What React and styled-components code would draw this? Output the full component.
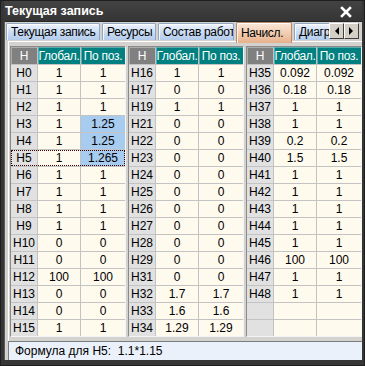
import React from 'react'
import styled, { createGlobalStyle } from 'styled-components'

const GlobalStyle = createGlobalStyle`
  html, body {
    margin: 0;
    padding: 0;
    background: #2f2f2f;
  }
  body {
    font-family: "Liberation Sans", Arial, sans-serif;
    font-size: 12px;
  }
`

const Window = styled.div`
  width: 365px;
  height: 366px;
  box-sizing: border-box;
  display: flex;
  flex-direction: column;
  background: #363636;
  border: 1px solid #1e1e1e;
  padding: 0 2px 5px 3px;
`

const TitleBar = styled.div`
  height: 20px;
  display: flex;
  align-items: center;
  justify-content: space-between;
  padding: 0 10px 0 1px;
  color: #fff;
  font-weight: bold;
  font-size: 12.5px;
  background: linear-gradient(#434343, #353535);
`

const CloseBtn = styled.div`
  width: 12px;
  height: 12px;
  display: flex;
  margin-top: 2px;
`

const Body = styled.div`
  flex: 1;
  display: flex;
  flex-direction: column;
  background: #d4d2ce;
  border-top: 1px solid #262626;
  border-left: 1px solid #5a5a5a;
`

const TabStrip = styled.div`
  height: 19px;
  display: flex;
  align-items: flex-end;
  padding-left: 1px;
`

const TabViewport = styled.div`
  width: 323px;
  display: flex;
  align-items: flex-end;
  gap: 2px;
  overflow-x: clip;
  overflow-y: visible;
`

const Tab = styled.div`
  flex: 0 0 ${p => p.$w}px;
  min-width: 0;
  box-sizing: border-box;
  height: ${p => (p.$active ? 21 : 17)}px;
  margin-bottom: ${p => (p.$active ? -2 : 1)}px;
  position: relative;
  z-index: ${p => (p.$active ? 2 : 0)};
  display: flex;
  align-items: center;
  padding-left: 4px;
  overflow: hidden;
  white-space: nowrap;
  font-size: 12px;
  letter-spacing: -0.3px;
  color: #000;
  border: 1px solid ${p => (p.$active ? '#b98a6c' : '#8fa6c4')};
  border-bottom: none;
  border-radius: 2px 2px 0 0;
  background: ${p => (p.$active
    ? 'linear-gradient(#fbe8da, #f0c8aa 60%, #e6b08c)'
    : 'linear-gradient(#eef3fb, #c9dbf3 55%, #b3cbeb)')};
  box-shadow: inset 1px 1px 0 rgba(255, 255, 255, 0.8);
`

const ScrollBtns = styled.div`
  display: flex;
  align-self: flex-start;
  margin-top: 1px;
  position: relative;
  z-index: 3;
`

const ArrowBtn = styled.div`
  width: 15px;
  height: 16px;
  box-sizing: border-box;
  display: flex;
  align-items: center;
  justify-content: center;
  background: #d4d0c8;
  border: 1px solid;
  border-color: #fff #404040 #404040 #fff;
`

const TabPanel = styled.div`
  flex: 0 0 300px;
  box-sizing: border-box;
  margin-left: 3px;
  border-top: 1px solid #fff;
  border-left: 1px solid #fff;
  padding: 4px 0 3px 1px;
  display: flex;
  gap: 2px;
  overflow: hidden;
`

const DataGrid = styled.div`
  display: flex;
  flex-direction: column;
  gap: 1px;
  background: #c3c3c3;
  border: 1px solid;
  border-color: #8a8a8a #f4f4f4 #f4f4f4 #8a8a8a;
  align-self: flex-start;
`

const Row = styled.div`
  display: grid;
  grid-template-columns: 26px 42px 44px;
  gap: 1px;
  height: ${p => (p.$head ? 17 : 16)}px;
  outline: ${p => (p.$focus ? '1px dotted #3a0000' : 'none')};
  outline-offset: -1px;
  position: relative;
  z-index: ${p => (p.$focus ? 1 : 0)};
`

const HeadCell = styled.div`
  display: flex;
  align-items: center;
  justify-content: center;
  color: #fff;
  font-size: 12px;
  letter-spacing: -0.3px;
  background: ${p => (p.$key ? '#808080' : '#008080')};
  box-shadow: inset 1px 1px 0 rgba(255, 255, 255, 0.35);
  white-space: nowrap;
`

const Cell = styled.div`
  display: flex;
  align-items: center;
  justify-content: center;
  color: #000;
  font-size: 12px;
  background: ${p => (p.$key ? '#e1e1e1' : p.$sel ? '#a8cbf0' : '#fffaee')};
`

const StatusBar = styled.div`
  flex: 0 0 19px;
  box-sizing: border-box;
  margin-left: 3px;
  display: flex;
  align-items: center;
  padding-left: 6px;
  background: #eaf1fb;
  border-top: 1px solid #7c7c7c;
  border-left: 1px solid #7c7c7c;
  white-space: pre;
  font-size: 12px;
  color: #000;
`

const tabs = [
  { name: 'Текущая запись', w: 94 },
  { name: 'Ресурсы', w: 54 },
  { name: 'Состав работ', w: 76 },
  { name: 'Начисл.', w: 56, active: true },
  { name: 'Диаграмма', w: 70 },
]

const grids = [
  [
    ['H0', '1', '1'], ['H1', '1', '1'], ['H2', '1', '1'], ['H3', '1', '1.25', 'sel'],
    ['H4', '1', '1.25', 'sel'], ['H5', '1', '1.265', 'focus'], ['H6', '1', '1'], ['H7', '1', '1'],
    ['H8', '1', '1'], ['H9', '1', '1'], ['H10', '0', '0'], ['H11', '0', '0'],
    ['H12', '100', '100'], ['H13', '0', '0'], ['H14', '0', '0'], ['H15', '1', '1'],
  ],
  [
    ['H16', '1', '1'], ['H17', '0', '0'], ['H19', '1', '1'], ['H21', '0', '0'],
    ['H22', '0', '0'], ['H23', '0', '0'], ['H24', '0', '0'], ['H25', '0', '0'],
    ['H26', '0', '0'], ['H27', '0', '0'], ['H28', '0', '0'], ['H29', '0', '0'],
    ['H31', '0', '0'], ['H32', '1.7', '1.7'], ['H33', '1.6', '1.6'], ['H34', '1.29', '1.29'],
  ],
  [
    ['H35', '0.092', '0.092'], ['H36', '0.18', '0.18'], ['H37', '1', '1'], ['H38', '1', '1'],
    ['H39', '0.2', '0.2'], ['H40', '1.5', '1.5'], ['H41', '1', '1'], ['H42', '1', '1'],
    ['H43', '1', '1'], ['H44', '1', '1'], ['H45', '1', '1'], ['H46', '100', '100'],
    ['H47', '1', '1'], ['H48', '1', '1'], ['', '', ''], ['', '', ''],
  ],
]

function Arrow({ dir }) {
  return (
    <svg width="5" height="8" viewBox="0 0 5 8">
      {dir === 'left'
        ? <polygon points="5,0 5,8 1,4" fill="#000" />
        : <polygon points="0,0 0,8 4,4" fill="#000" />}
    </svg>
  )
}

function Grid({ rows }) {
  return (
    <DataGrid>
      <Row $head>
        <HeadCell $key>H</HeadCell>
        <HeadCell>Глобал.</HeadCell>
        <HeadCell>По поз.</HeadCell>
      </Row>
      {rows.map((r, i) => (
        <Row key={i} $focus={r[3] === 'focus'}>
          <Cell $key>{r[0]}</Cell>
          <Cell>{r[1]}</Cell>
          <Cell $sel={r[3] === 'sel' || r[3] === 'focus'}>{r[2]}</Cell>
        </Row>
      ))}
    </DataGrid>
  )
}

export default function App() {
  return (
    <>
      <GlobalStyle />
      <Window>
        <TitleBar>
          <span>Текущая запись</span>
          <CloseBtn>
            <svg width="12" height="12" viewBox="0 0 12 12">
              <path d="M2 2 L10 10 M10 2 L2 10" stroke="#fff" strokeWidth="2.6" strokeLinecap="square" />
            </svg>
          </CloseBtn>
        </TitleBar>
        <Body>
          <TabStrip>
            <TabViewport>
              {tabs.map(t => (
                <Tab key={t.name} $w={t.w} $active={t.active}>{t.name}</Tab>
              ))}
            </TabViewport>
            <ScrollBtns>
              <ArrowBtn><Arrow dir="left" /></ArrowBtn>
              <ArrowBtn><Arrow dir="right" /></ArrowBtn>
            </ScrollBtns>
          </TabStrip>
          <TabPanel>
            {grids.map((g, i) => <Grid key={i} rows={g} />)}
          </TabPanel>
          <StatusBar>Формула для H5:  1.1*1.15</StatusBar>
        </Body>
      </Window>
    </>
  )
}
